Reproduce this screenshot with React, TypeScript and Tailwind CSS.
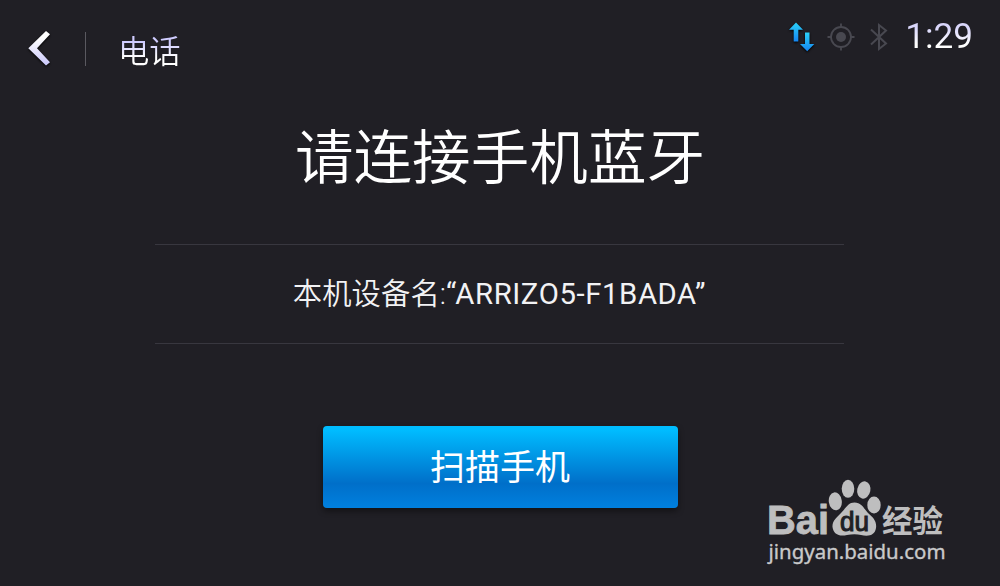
import type { ReactNode } from "react";

const BackIcon = () => (
    <svg className="h-[40px] w-[28px] drop-shadow-[0_1px_1px_#000]" viewBox="0 0 28 40">
        <defs>
            <linearGradient id="back" x1="0" y1="0" x2="0" y2="1">
                <stop offset="0.2" stopColor="#ffffff" />
                <stop offset="1" stopColor="#c9c6fa" />
            </linearGradient>
        </defs>
        <path d="M18 2 L22 5.3 L9 19.3 L22 33.3 L18 36.6 L0.3 19.3 Z" fill="url(#back)" />
    </svg>
);

const DataIcon = () => (
    <svg className="h-[32px] w-[27px] drop-shadow-[0_1px_1px_#000]" viewBox="0 0 27 32">
        <defs>
            <linearGradient id="data" x1="0" y1="0" x2="0" y2="1">
                <stop offset="0" stopColor="#2bd0f8" />
                <stop offset="1" stopColor="#1585f0" />
            </linearGradient>
        </defs>
        <path d="M8 1.5 L15 8.8 H10.3 V20.5 H5.7 V8.8 H1 Z" fill="url(#data)" />
        <path d="M17 11.5 H21.5 V23 H26.3 L19.2 30.2 L12 23 H17 Z" fill="url(#data)" />
    </svg>
);

const GpsIcon = () => (
    <svg className="h-[28px] w-[28px]" viewBox="0 0 28 28" fill="none" stroke="#484850" strokeWidth="1.8">
        <circle cx="14" cy="14" r="10" />
        <circle cx="14" cy="14" r="5" fill="#484850" stroke="none" />
        <path d="M14 .5V5M14 23V27.5M.5 14H5M23 14H27.5" />
    </svg>
);

const BluetoothIcon = () => (
    <svg className="h-[30px] w-[20px]" viewBox="0 0 20 30" fill="none" stroke="#484850" strokeWidth="2">
        <path d="M2 7.5 L17 21.5 L10 27 V3 L17 8.5 L2 22.5" />
    </svg>
);

const BaiduLogo = () => (
    <svg
        className="absolute left-[760px] top-[474px] h-[96px] w-[200px]"
        viewBox="0 0 200 96"
        fill="#bebebf"
    >
        <text x="7" y="60.3" fontSize="40" fontWeight="bold" fontFamily="Liberation Sans" stroke="#bebebf" strokeWidth=".8" textLength="62" lengthAdjust="spacingAndGlyphs">
            Bai
        </text>
        <ellipse cx="75.3" cy="27.3" rx="6.5" ry="9" transform="rotate(-8 75.3 27.3)" />
        <ellipse cx="88" cy="14.8" rx="6.3" ry="9" />
        <ellipse cx="103.8" cy="16" rx="6.6" ry="8.7" transform="rotate(12 103.8 16)" />
        <ellipse cx="114" cy="31" rx="6.7" ry="8.5" />
        <path d="M94.5 28.5 C102 28.5 104 35 108 39 C113 43.5 117 47 116 54 C115 61 109 63 101 61 C97 60 92 60 87 61 C79 63 73.5 60 72.5 53 C72 47 77 43 81 39 C86 34 88 28.5 94.5 28.5 Z" />
        <text x="80" y="56.8" fontSize="27" fontFamily="Liberation Sans" fill="#201f25" stroke="#201f25" strokeWidth="1.1" textLength="29" lengthAdjust="spacingAndGlyphs">
            du
        </text>
        <text x="122" y="58" fontSize="31" fontWeight="bold" fontFamily="Noto Sans CJK SC" textLength="61" lengthAdjust="spacingAndGlyphs">
            经验
        </text>
        <text x="8.5" y="84.5" fontSize="20" fontFamily="Noto Sans" fill="#c9c9ca" stroke="#c9c9ca" strokeWidth=".35" textLength="177" lengthAdjust="spacingAndGlyphs">
            jingyan.baidu.com
        </text>
    </svg>
);

const DeviceRow = ({ children }: { children: ReactNode }) => (
    <div className="mr-px flex h-[100px] w-[689px] items-center justify-center border-y border-[#38373f] pt-[2px] text-[29.3px] text-[#f2f2f4]">
        {children}
    </div>
);

const App = () => {
    return (
        <div className="relative flex h-[586px] w-[1000px] flex-col overflow-hidden bg-[#201f25] font-['Roboto','Noto_Sans_CJK_SC',sans-serif] text-white">
            <header className="flex h-[98px] items-start justify-between pl-[28px] pr-[27px]">
                <div className="flex h-[98px] items-center">
                    <button type="button" aria-label="返回">
                        <BackIcon />
                    </button>
                    <div className="ml-[29px] h-[34px] w-px bg-[#5a5960]" />
                    <h1 className="ml-[32px] mt-[7px] bg-linear-to-b from-[#cfccff] from-25% to-white to-60% bg-clip-text text-[31.3px] font-[350] leading-[40px] text-transparent">
                        电话
                    </h1>
                </div>
                <div className="flex h-[73px] items-center">
                    <DataIcon />
                    <div className="ml-[12px]">
                        <GpsIcon />
                    </div>
                    <div className="ml-[14px]">
                        <BluetoothIcon />
                    </div>
                    <span className="-mt-[2px] ml-[16px] bg-linear-to-b from-[#d9d6fb] from-30% to-white to-70% bg-clip-text text-[35.2px] leading-[40px] text-transparent">
                        1:29
                    </span>
                </div>
            </header>
            <main className="flex flex-col items-center">
                <h2 className="flex h-[146px] items-start pt-[21px] text-[58.6px] font-[350] leading-[80px]">
                    请连接手机蓝牙
                </h2>
                <DeviceRow>
                    <span className="font-[350] tracking-[0.1px]">本机设备名:</span>
                    <span className="tracking-[0.6px]">“ARRIZO5-F1BADA”</span>
                </DeviceRow>
                <button
                    type="button"
                    className="mt-[82px] h-[82px] w-[355px] rounded-[4px] bg-linear-to-b from-[#00bcff] from-5% via-[#006fc9] via-70% to-[#0080df] pt-[4px] text-[35px] shadow-[0_3px_6px_rgba(0,0,0,0.45)]"
                >
                    扫描手机
                </button>
            </main>
            <BaiduLogo />
        </div>
    );
};

export default App;
